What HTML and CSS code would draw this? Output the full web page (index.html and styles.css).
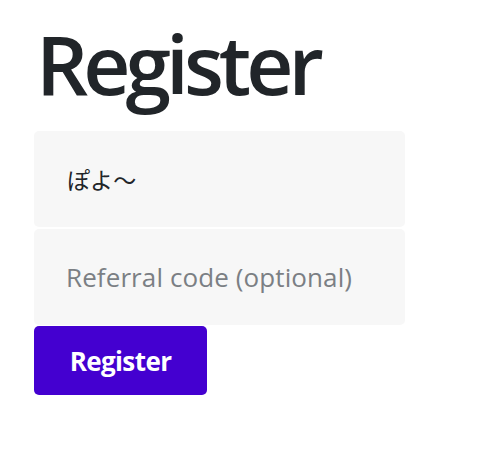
FILE: index.html
```html
<!DOCTYPE html>
<html lang="ja">
<head>
<meta charset="utf-8">
<link rel="stylesheet" href="styles.css">
</head>
<body>
<main class="page">
  <h1 class="title">Register</h1>
  <form class="form">
    <input class="field field-name" type="text" value="ぽよ〜">
    <input class="field" type="text" placeholder="Referral code (optional)">
    <button class="btn" type="button">Register</button>
  </form>
</main>
</body>
</html>
```
FILE: styles.css
```css
html, body {
  margin: 0;
  padding: 0;
  background: #ffffff;
}
.page {
  padding: 18px 0 0 34px;
  font-family: "Open Sans", "Noto Sans CJK JP", sans-serif;
}
.title {
  margin: 0 0 23px 2px;
  font-size: 82px;
  font-weight: 600;
  line-height: 1.1;
  letter-spacing: -5px;
  color: #212529;
}
.form {
  display: flex;
  flex-direction: column;
  align-items: flex-start;
  gap: 2px;
}
.field {
  box-sizing: border-box;
  width: 371px;
  height: 96px;
  padding: 0 0 0 32px;
  border: none;
  border-radius: 5px;
  background: #f7f7f7;
  font-family: "Open Sans", "Noto Sans CJK JP", sans-serif;
  font-size: 26px;
  letter-spacing: 0.1px;
  color: #212529;
  outline: none;
}
.field-name {
  font-size: 23px;
  padding-left: 33px;
}
.field::placeholder {
  color: #7b7f84;
}
.btn {
  margin-top: -1px;
  width: 173px;
  height: 69px;
  border: none;
  border-radius: 5px;
  background: #4400d0;
  color: #ffffff;
  font-family: "Open Sans", sans-serif;
  font-size: 26px;
  font-weight: 700;
  letter-spacing: -0.6px;
}
```
